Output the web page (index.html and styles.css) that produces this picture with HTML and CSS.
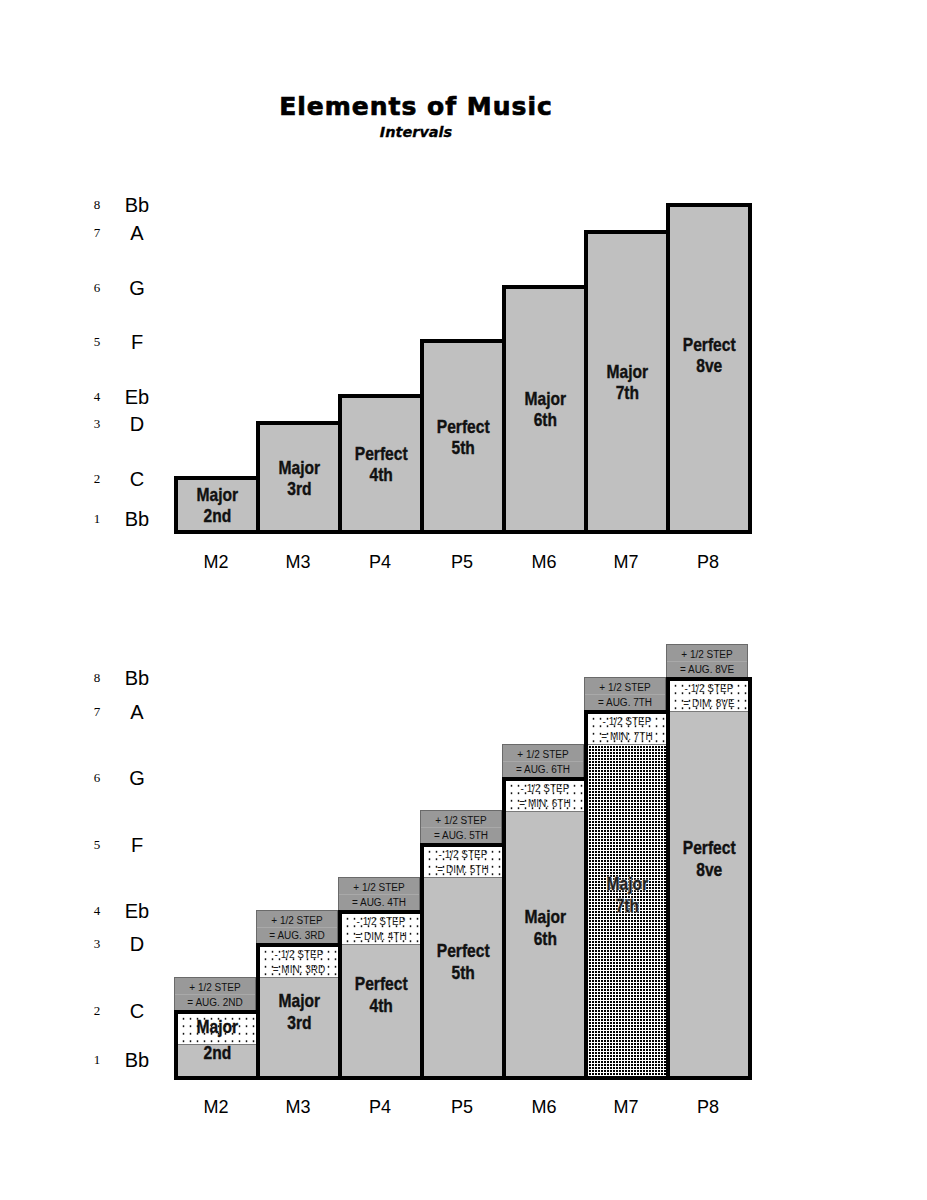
FILE: index.html
```html
<!DOCTYPE html>
<html lang="en">
<head>
<meta charset="utf-8">
<title>Elements of Music – Intervals</title>
<link rel="stylesheet" href="styles.css">
</head>
<body>
<header class="header">
  <h1 class="title">Elements of Music</h1>
  <p class="subtitle">Intervals</p>
</header>

<section class="chart chart--top">
  <div class="axis">
    <div class="tick" style="top:2px"><span class="tick-num">8</span><span class="tick-note">Bb</span></div>
    <div class="tick" style="top:30px"><span class="tick-num">7</span><span class="tick-note">A</span></div>
    <div class="tick" style="top:85px"><span class="tick-num">6</span><span class="tick-note">G</span></div>
    <div class="tick" style="top:139px"><span class="tick-num">5</span><span class="tick-note">F</span></div>
    <div class="tick" style="top:194px"><span class="tick-num">4</span><span class="tick-note">Eb</span></div>
    <div class="tick" style="top:221px"><span class="tick-num">3</span><span class="tick-note">D</span></div>
    <div class="tick" style="top:276px"><span class="tick-num">2</span><span class="tick-note">C</span></div>
    <div class="tick" style="top:316px"><span class="tick-num">1</span><span class="tick-note">Bb</span></div>
  </div>
  <div class="plot">
    <div class="bars">
      <div class="bar" style="height:58.5px"><span class="label">Major<br>2nd</span></div>
      <div class="bar" style="height:113px"><span class="label">Major<br>3rd</span></div>
      <div class="bar" style="height:140.25px"><span class="label">Perfect<br>4th</span></div>
      <div class="bar" style="height:194.75px"><span class="label">Perfect<br>5th</span></div>
      <div class="bar" style="height:249.25px"><span class="label">Major<br>6th</span></div>
      <div class="bar" style="height:303.75px"><span class="label">Major<br>7th</span></div>
      <div class="bar" style="height:331px"><span class="label label--raised">Perfect<br>8ve</span></div>
    </div>
    <div class="xlabels">
      <span class="xlabel">M2</span><span class="xlabel">M3</span><span class="xlabel">P4</span><span class="xlabel">P5</span><span class="xlabel">M6</span><span class="xlabel">M7</span><span class="xlabel">P8</span>
    </div>
  </div>
</section>

<section class="chart chart--bottom">
  <div class="axis">
    <div class="tick" style="top:34px"><span class="tick-num">8</span><span class="tick-note">Bb</span></div>
    <div class="tick" style="top:68px"><span class="tick-num">7</span><span class="tick-note">A</span></div>
    <div class="tick" style="top:134px"><span class="tick-num">6</span><span class="tick-note">G</span></div>
    <div class="tick" style="top:201px"><span class="tick-num">5</span><span class="tick-note">F</span></div>
    <div class="tick" style="top:267px"><span class="tick-num">4</span><span class="tick-note">Eb</span></div>
    <div class="tick" style="top:300px"><span class="tick-num">3</span><span class="tick-note">D</span></div>
    <div class="tick" style="top:367px"><span class="tick-num">2</span><span class="tick-note">C</span></div>
    <div class="tick" style="top:416px"><span class="tick-num">1</span><span class="tick-note">Bb</span></div>
  </div>
  <div class="plot">
    <div class="bars">
      <div class="col">
        <div class="aug">+ 1/2 STEP<br>= AUG. 2ND</div>
        <div class="sbar" style="height:70.5px">
          <div class="dots"></div>
          <div class="body"></div>
          <span class="label label--split">Major<br>2nd</span>
        </div>
      </div>
      <div class="col">
        <div class="aug">+ 1/2 STEP<br>= AUG. 3RD</div>
        <div class="sbar" style="height:137px">
          <div class="dots">- 1/2 STEP<br>= MIN. 3RD</div>
          <div class="body"></div>
          <span class="label">Major<br>3rd</span>
        </div>
      </div>
      <div class="col">
        <div class="aug">+ 1/2 STEP<br>= AUG. 4TH</div>
        <div class="sbar" style="height:170.25px">
          <div class="dots">- 1/2 STEP<br>= DIM. 4TH</div>
          <div class="body"></div>
          <span class="label">Perfect<br>4th</span>
        </div>
      </div>
      <div class="col">
        <div class="aug">+ 1/2 STEP<br>= AUG. 5TH</div>
        <div class="sbar" style="height:236.75px">
          <div class="dots">- 1/2 STEP<br>= DIM. 5TH</div>
          <div class="body"></div>
          <span class="label">Perfect<br>5th</span>
        </div>
      </div>
      <div class="col">
        <div class="aug">+ 1/2 STEP<br>= AUG. 6TH</div>
        <div class="sbar" style="height:303.25px">
          <div class="dots">- 1/2 STEP<br>= MIN. 6TH</div>
          <div class="body"></div>
          <span class="label">Major<br>6th</span>
        </div>
      </div>
      <div class="col">
        <div class="aug">+ 1/2 STEP<br>= AUG. 7TH</div>
        <div class="sbar" style="height:369.75px">
          <div class="dots">- 1/2 STEP<br>= MIN. 7TH</div>
          <div class="body body--dense"></div>
          <span class="label label--dim">Major<br>7th</span>
        </div>
      </div>
      <div class="col">
        <div class="aug">+ 1/2 STEP<br>= AUG. 8VE</div>
        <div class="sbar" style="height:403px">
          <div class="dots">- 1/2 STEP<br>= DIM. 8VE</div>
          <div class="body"></div>
          <span class="label label--raised-lg">Perfect<br>8ve</span>
        </div>
      </div>
    </div>
    <div class="xlabels xlabels--bottom">
      <span class="xlabel">M2</span><span class="xlabel">M3</span><span class="xlabel">P4</span><span class="xlabel">P5</span><span class="xlabel">M6</span><span class="xlabel">M7</span><span class="xlabel">P8</span>
    </div>
  </div>
</section>
</body>
</html>
```

FILE: styles.css
```css
* { box-sizing: border-box; }
html, body { margin: 0; background: #fff; }
body {
  width: 927px;
  height: 1200px;
  color: #000;
  font-family: "Liberation Sans", Arial, sans-serif;
  overflow: hidden;
}

/* header */
.header { width: 832px; padding-top: 93px; text-align: center; }
.title {
  margin: 0;
  font: bold 25px/28px "DejaVu Sans", sans-serif;
  letter-spacing: 1px;
  -webkit-text-stroke: 0.7px #000;
}
.subtitle {
  margin: 2px 0 0;
  font: italic bold 14.5px/18px "DejaVu Sans", sans-serif;
  -webkit-text-stroke: 0.3px #000;
}

/* chart layout */
.chart { display: flex; }
.chart--top { margin-top: 62px; }
.chart--bottom { margin-top: 71px; }

.axis { position: relative; width: 174px; flex: none; }
.chart--top .axis { height: 331px; }
.chart--bottom .axis { height: 436px; }

.tick {
  position: absolute;
  left: 0;
  display: flex;
  align-items: center;
  transform: translateY(-50%);
}
.tick-num {
  width: 18px;
  margin-left: 88px;
  text-align: center;
  color: #000;
  font: 13px/16px "Liberation Serif", serif;
}
.tick-note {
  width: 40px;
  margin-left: 11px;
  text-align: center;
  font: 20px/22px "Liberation Sans", sans-serif;
}

.plot { display: flex; flex-direction: column; }
.bars { display: flex; align-items: flex-end; }
.chart--top .bars { height: 331px; }
.chart--bottom .bars { height: 436px; }

/* top chart bars */
.bar {
  width: 86px;
  border: 4px solid #000;
  background: #c0c0c0;
  display: flex;
  align-items: center;
  justify-content: center;
}
.bar + .bar { margin-left: -4px; }

.label {
  display: block;
  font: bold 19px/21px "Liberation Sans", sans-serif;
  color: #111;
  text-align: center;
  transform: scaleX(0.82);
  -webkit-text-stroke: 0.4px #111;
}
.label--raised { margin-bottom: 28px; }

/* bottom chart columns */
.col { width: 86px; display: flex; flex-direction: column; }
.col + .col { margin-left: -4px; }

.aug {
  width: 82px;
  height: 33px;
  padding-top: 2px;
  border: 1px solid #6a6a6a;
  border-bottom: none;
  background:
    linear-gradient(to bottom, transparent 16px, #a9a9a9 16px, #a9a9a9 17px, transparent 17px),
    #999;
  color: #111;
  text-align: center;
  font: 10px/15px "Liberation Sans", sans-serif;
}

.sbar {
  width: 86px;
  border: 4px solid #000;
  display: grid;
  grid-template-columns: 1fr;
  grid-template-rows: 31px 1fr;
  background: #c0c0c0;
}
.dots {
  grid-row: 1;
  grid-column: 1;
  border-bottom: 1px solid #7a7a7a;
  background:
    radial-gradient(circle, #111 0 0.8px, transparent 1.2px) 2px 1px / 7px 7.5px,
    #fff;
  color: #222;
  text-align: center;
  font: 10px/15px "Liberation Sans", sans-serif;
  display: flex;
  align-items: center;
  justify-content: center;
}
.body { grid-row: 2; grid-column: 1; background: #c0c0c0; }
.body--dense {
  background:
    linear-gradient(90deg, #fff 1px, transparent 1px) 0 0 / 3px 3px,
    linear-gradient(#fff 1px, transparent 1px) 0 0 / 3px 3px,
    #000;
}
.sbar .label {
  grid-row: 1 / 3;
  grid-column: 1;
  align-self: center;
  justify-self: center;
  line-height: 22px;
}
.sbar .label--split { line-height: 26px; margin-bottom: 10px; }
.sbar .label--raised-lg { margin-bottom: 40px; }
.sbar .label--dim {
  color: #222;
  -webkit-text-stroke: 0.4px #222;
  text-shadow: 0 0 2px #fff, 0 0 2px #fff;
}

/* x labels */
.xlabels { display: flex; padding-left: 1px; margin-top: 17px; }
.xlabels--bottom { margin-top: 16px; }
.xlabel {
  width: 82px;
  text-align: center;
  font: 18px/22px "Liberation Sans", sans-serif;
}
```
